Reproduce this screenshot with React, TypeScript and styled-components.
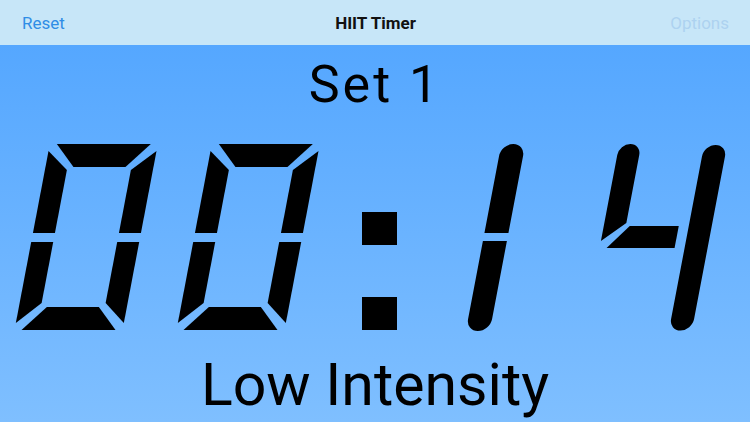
import React from "react";
import styled, { createGlobalStyle } from "styled-components";

const GlobalStyle = createGlobalStyle`
  html, body {
    margin: 0;
    padding: 0;
    background: #62adff;
  }
  body {
    font-family: Roboto, "Noto Sans", "Liberation Sans", sans-serif;
    -webkit-font-smoothing: antialiased;
  }
`;

const Screen = styled.div`
  width: 750px;
  height: 422px;
  display: flex;
  flex-direction: column;
  overflow: hidden;
`;

const NavBar = styled.header`
  height: 45px;
  flex: 0 0 45px;
  background: #c7e6f8;
  display: grid;
  grid-template-columns: 1fr auto 1fr;
  align-items: center;
  padding: 0 21px 0 22px;
  box-sizing: border-box;
`;

const NavButton = styled.span<{ $muted?: boolean; $align: "left" | "right" }>`
  font-size: 17px;
  color: ${(p) => (p.$muted ? "#add2f0" : "#2f8de6")};
  justify-self: ${(p) => (p.$align === "left" ? "start" : "end")};
`;

const NavTitle = styled.span`
  font-size: 17px;
  font-weight: 700;
  color: #111;
`;

const Main = styled.main`
  flex: 1;
  background: linear-gradient(180deg, #55a7ff 0%, #7fbfff 100%);
  display: flex;
  flex-direction: column;
  align-items: center;
`;

const SetLabel = styled.div`
  margin-top: 14px;
  height: 52px;
  font-size: 52px;
  line-height: 52px;
  letter-spacing: 3px;
  color: #000;
`;

const ClockSvg = styled.svg`
  display: block;
  margin-top: 27px;
  width: 750px;
  height: 200px;
  flex: 0 0 200px;
`;

const PhaseLabel = styled.div`
  margin-top: 17px;
  height: 59px;
  font-size: 59px;
  line-height: 59px;
  color: #000;
`;

const SLANT = 0.19;
const ANGLE = (-Math.atan(SLANT) * 180) / Math.PI;
const GLYPH_TOP = 6;
const GLYPH_H = 186;

const glyphTransform = (left: number) =>
  `translate(${left + SLANT * GLYPH_H} ${GLYPH_TOP}) skewX(${ANGLE})`;

const ZERO_SEGMENTS = [
  "M7 0H101L80 23H28Z",
  "M0 7L22 26V89H0Z",
  "M0 98H22V159L0 179Z",
  "M28 163H80L101 186H7Z",
  "M108 7L86 26V89H108Z",
  "M108 98H86V159L108 179Z",
];

const ONE_SEGMENTS = [
  "M0 12A12 12 0 0 1 24 12V89H0Z",
  "M0 97H24V175A12 12 0 0 1 0 175Z",
];

const FOUR_SEGMENTS = [
  "M0 11A11 11 0 0 1 22 11V79L0 97Z",
  "M26 82H75V104H7Z",
  "M85 12.5A11.5 11.5 0 0 1 108 12.5V175A11.5 11.5 0 0 1 85 175Z",
];

const Glyph = ({ left, segments }: { left: number; segments: string[] }) => (
  <g transform={glyphTransform(left)} fill="#000">
    {segments.map((d, i) => (
      <path key={i} d={d} />
    ))}
  </g>
);

const Clock = () => (
  <ClockSvg viewBox="0 0 750 200" aria-label="00:14">
    <Glyph left={14.5} segments={ZERO_SEGMENTS} />
    <Glyph left={176.5} segments={ZERO_SEGMENTS} />
    <rect x={362} y={74} width={35} height={33} fill="#000" />
    <rect x={362} y={159} width={35} height={33} fill="#000" />
    <Glyph left={466} segments={ONE_SEGMENTS} />
    <Glyph left={584} segments={FOUR_SEGMENTS} />
  </ClockSvg>
);

export default function App() {
  return (
    <>
      <GlobalStyle />
      <Screen>
        <NavBar>
          <NavButton $align="left">Reset</NavButton>
          <NavTitle>HIIT Timer</NavTitle>
          <NavButton $align="right" $muted>
            Options
          </NavButton>
        </NavBar>
        <Main>
          <SetLabel>Set 1</SetLabel>
          <Clock />
          <PhaseLabel>Low Intensity</PhaseLabel>
        </Main>
      </Screen>
    </>
  );
}
